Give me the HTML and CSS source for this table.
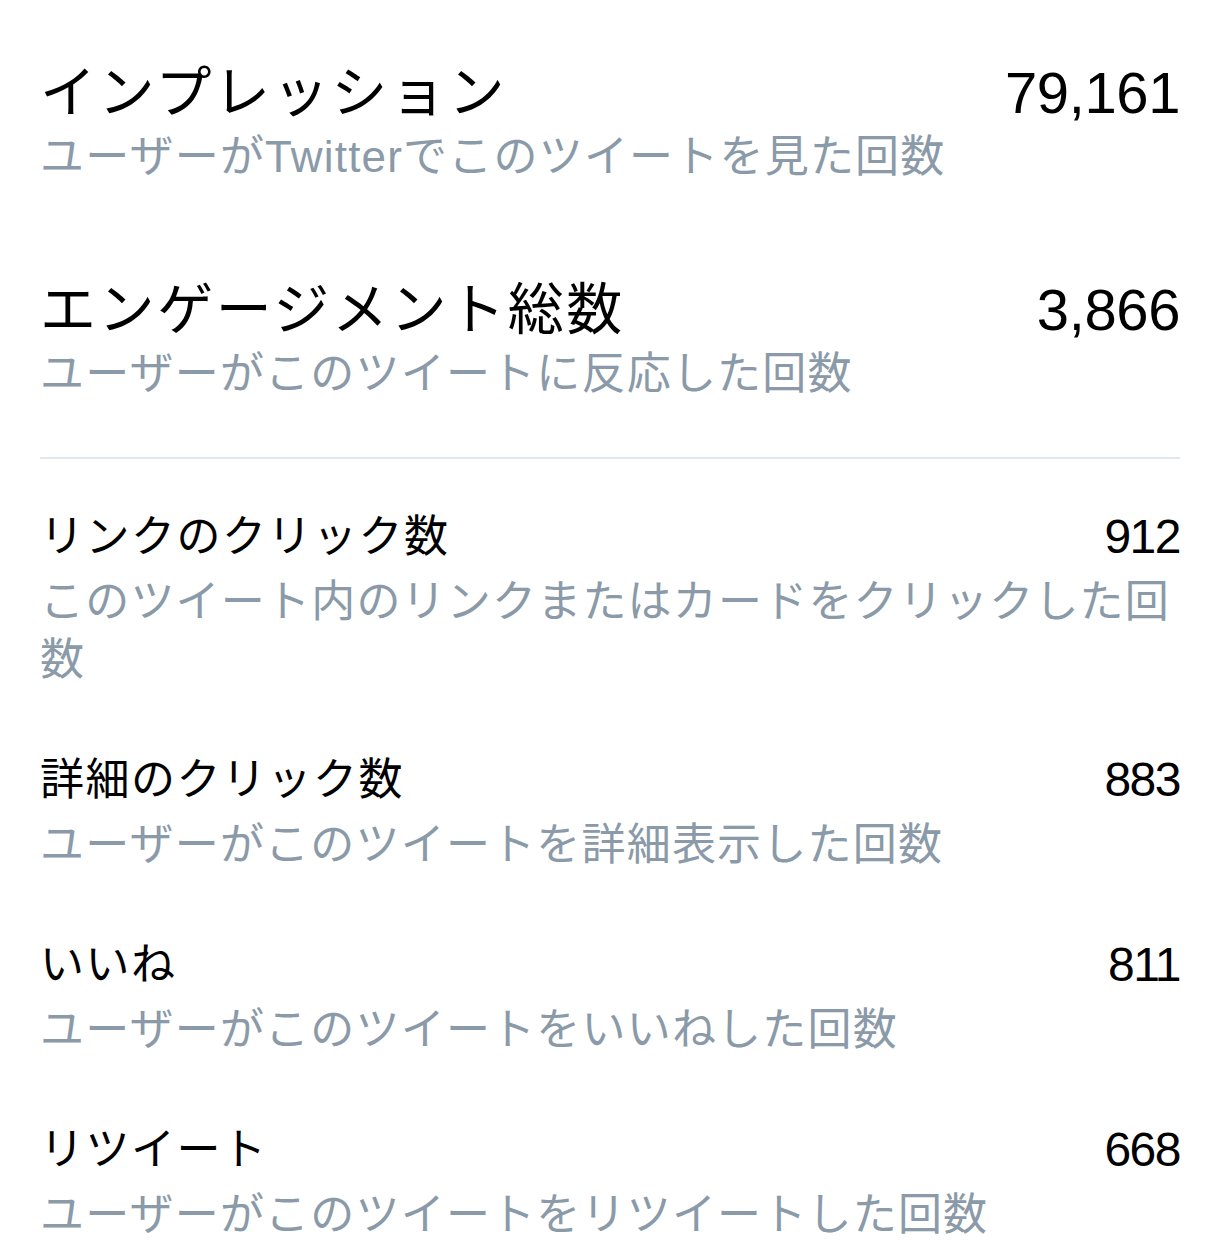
FILE: index.html
```html
<!DOCTYPE html>
<html lang="ja">
<head>
    <meta charset="UTF-8">
    <meta name="viewport" content="width=device-width, initial-scale=1.0">
    <title>ツイートアクティビティ</title>
    <link rel="stylesheet" href="styles.css">
</head>
<body>
    <div class="stats">
        <div class="stat stat-main">
            <div class="stat-head">
                <div class="stat-title">インプレッション</div>
                <div class="stat-value">79,161</div>
            </div>
            <div class="stat-desc">ユーザーがTwitterでこのツイートを見た回数</div>
        </div>

        <div class="stat stat-main">
            <div class="stat-head">
                <div class="stat-title">エンゲージメント総数</div>
                <div class="stat-value">3,866</div>
            </div>
            <div class="stat-desc">ユーザーがこのツイートに反応した回数</div>
        </div>

        <hr class="divider">

        <div class="stat">
            <div class="stat-head">
                <div class="stat-title">リンクのクリック数</div>
                <div class="stat-value">912</div>
            </div>
            <div class="stat-desc">このツイート内のリンクまたはカードをクリックした回数</div>
        </div>

        <div class="stat">
            <div class="stat-head">
                <div class="stat-title">詳細のクリック数</div>
                <div class="stat-value">883</div>
            </div>
            <div class="stat-desc">ユーザーがこのツイートを詳細表示した回数</div>
        </div>

        <div class="stat">
            <div class="stat-head">
                <div class="stat-title">いいね</div>
                <div class="stat-value">811</div>
            </div>
            <div class="stat-desc">ユーザーがこのツイートをいいねした回数</div>
        </div>

        <div class="stat">
            <div class="stat-head">
                <div class="stat-title">リツイート</div>
                <div class="stat-value">668</div>
            </div>
            <div class="stat-desc">ユーザーがこのツイートをリツイートした回数</div>
        </div>
    </div>
</body>
</html>
```

FILE: styles.css
```css
body {
    margin: 0;
    background: #ffffff;
    font-family: "Liberation Sans", "Noto Sans CJK JP", sans-serif;
    color: #000000;
}
.stats {
    padding: 60px 40px 0 40px;
}
.stat {
    margin-bottom: 61px;
}
.stat-head {
    display: flex;
    align-items: flex-start;
    justify-content: space-between;
}
.stat-title {
    font-size: 44px;
    line-height: 60px;
    letter-spacing: 1.5px;
}
.stat-desc {
    margin-top: 6px;
    font-size: 44px;
    line-height: 58px;
    letter-spacing: 1.2px;
    color: #8a9aa8;
}
.stat-value {
    font-size: 48px;
    line-height: 60px;
    letter-spacing: -1.5px;
    white-space: nowrap;
}
.stat-main {
    margin-bottom: 91px;
}
.stat-main .stat-title {
    font-size: 56px;
    line-height: 66px;
    letter-spacing: 2.6px;
}
.stat-main .stat-desc {
    margin-top: 2px;
}
.stat-main .stat-value {
    font-size: 58px;
    line-height: 66px;
    letter-spacing: -0.4px;
}
.divider {
    border: none;
    border-top: 2px solid #e1e8ed;
    margin: -37px 0 48px 0;
}
```
